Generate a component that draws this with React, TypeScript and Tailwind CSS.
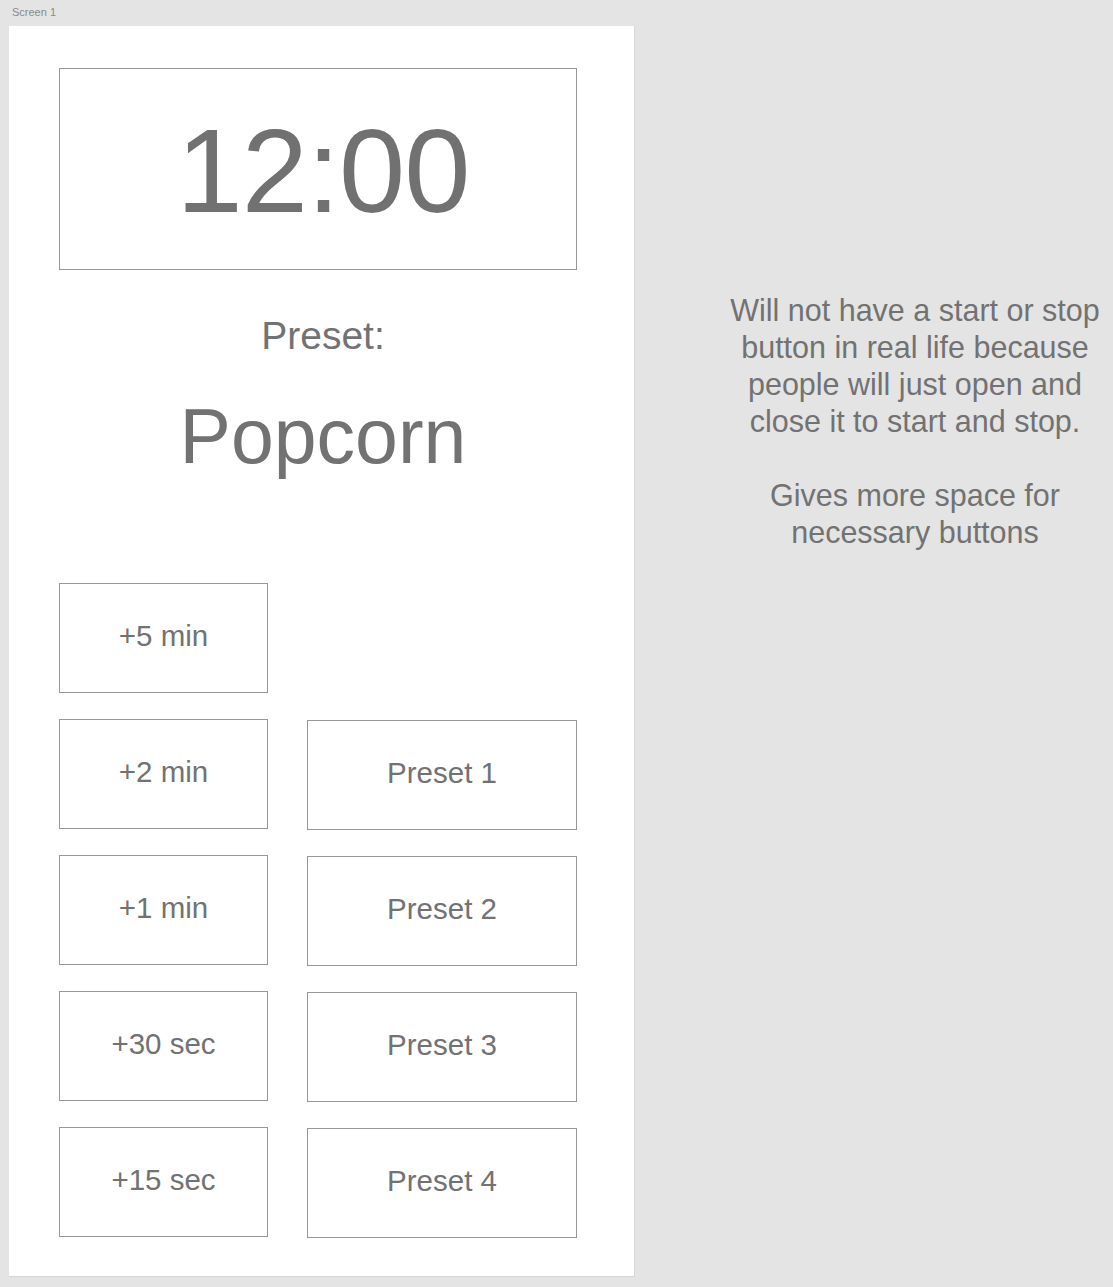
const adders = ["+5 min", "+2 min", "+1 min", "+30 sec", "+15 sec"];
const presets = ["Preset 1", "Preset 2", "Preset 3", "Preset 4"];

function Btn({ label, wide }: { label: string; wide?: boolean }) {
  return (
    <div
      className={`h-[110px] ${wide ? "w-[270px]" : "w-[209px]"} border border-[#979797] flex items-center justify-center pb-[4px] text-[29.5px] text-[#727272]`}
    >
      {label}
    </div>
  );
}

export default function App() {
  return (
    <div
      className="min-h-[1287px] w-[1113px] bg-[#e4e4e4] overflow-hidden"
      style={{ fontFamily: '"Liberation Sans", Arial, sans-serif' }}
    >
      <div className="h-[26px] pl-[12px] pt-[5px] text-[11px] leading-[14px] text-[#8a8a8a]">Screen 1</div>
      <div className="flex">
        <div className="shrink-0 ml-[9px] w-[626px] h-[1251px] bg-white border-r border-b border-[#d6d6d6] pt-[42px] pl-[50px]">
          <div className="w-[518px] h-[202px] border border-[#979797] flex items-center justify-center pl-[10px]">
            <span className="text-[119px] leading-none text-[#717171] tracking-[-1px] pt-[2px]">12:00</span>
          </div>
          <div className="w-[518px] pl-[10px] mt-[44px] text-center text-[39px] leading-[44px] text-[#727272]">Preset:</div>
          <div className="w-[518px] pl-[10px] mt-[38px] text-center text-[77px] leading-[80px] text-[#727272]">Popcorn</div>
          <div className="flex gap-[39px] mt-[107px]">
            <div className="flex flex-col gap-[26px]">
              {adders.map((a) => (
                <Btn key={a} label={a} />
              ))}
            </div>
            <div className="flex flex-col gap-[26px] pt-[137px]">
              {presets.map((p) => (
                <Btn key={p} label={p} wide />
              ))}
            </div>
          </div>
        </div>
        <div className="shrink-0 w-[384px] ml-[88px] pt-[266px] text-center text-[30.5px] leading-[37px] text-[#727272]">
          <p>Will not have a start or stop button in real life because people will just open and close it to start and stop.</p>
          <p className="mt-[37px]">Gives more space for necessary buttons</p>
        </div>
      </div>
    </div>
  );
}
